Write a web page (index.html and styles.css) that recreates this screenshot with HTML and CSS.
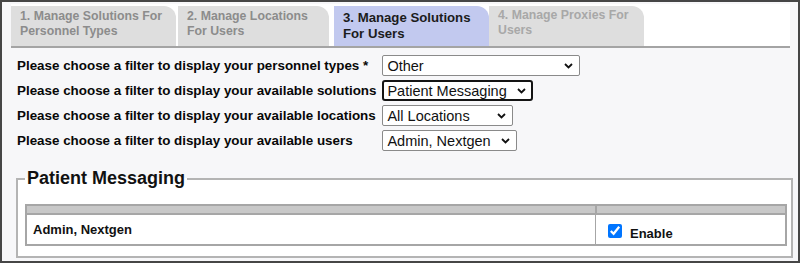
FILE: index.html
```html
<!DOCTYPE html>
<html>
<head>
<meta charset="utf-8">
<link rel="stylesheet" href="styles.css">
</head>
<body>
<div class="frame">
  <div class="tabs">
    <div class="tab tab-done">1. Manage Solutions For Personnel Types</div>
    <div class="tab tab-done tab-2">2. Manage Locations For Users</div>
    <div class="tab tab-active">3. Manage Solutions For Users</div>
    <div class="tab tab-next">4. Manage Proxies For Users</div>
  </div>
  <div class="content">
    <div class="filters">
      <label class="flabel">Please choose a filter to display your personnel types *</label>
      <span class="selwrap"><select class="sel sel-wide"><option>Other</option></select><svg class="chev" width="9" height="6" viewBox="0 0 9 6"><path d="M1 1 L4.5 4.5 L8 1" fill="none" stroke="#111" stroke-width="1.8"/></svg></span>
      <label class="flabel">Please choose a filter to display your available solutions</label>
      <span class="selwrap"><select class="sel sel-focus sel-sol"><option>Patient Messaging</option></select><svg class="chev" width="9" height="6" viewBox="0 0 9 6"><path d="M1 1 L4.5 4.5 L8 1" fill="none" stroke="#111" stroke-width="1.8"/></svg></span>
      <label class="flabel">Please choose a filter to display your available locations</label>
      <span class="selwrap"><select class="sel sel-loc"><option>All Locations</option></select><svg class="chev" width="9" height="6" viewBox="0 0 9 6"><path d="M1 1 L4.5 4.5 L8 1" fill="none" stroke="#111" stroke-width="1.8"/></svg></span>
      <label class="flabel">Please choose a filter to display your available users</label>
      <span class="selwrap"><select class="sel sel-user"><option>Admin, Nextgen</option></select><svg class="chev" width="9" height="6" viewBox="0 0 9 6"><path d="M1 1 L4.5 4.5 L8 1" fill="none" stroke="#111" stroke-width="1.8"/></svg></span>
    </div>
    <fieldset class="box">
      <legend class="box-title">Patient Messaging</legend>
      <table class="grid">
        <thead>
          <tr><th class="c-name"></th><th class="c-en"></th></tr>
        </thead>
        <tbody>
          <tr>
            <td class="c-name">Admin, Nextgen</td>
            <td class="c-en"><label class="enable"><input type="checkbox" checked> <span>Enable</span></label></td>
          </tr>
        </tbody>
      </table>
    </fieldset>
  </div>
</div>
</body>
</html>
```
FILE: styles.css
```css
html, body {
  margin: 0;
  padding: 0;
}
body {
  font-family: "Liberation Sans", Arial, sans-serif;
  background: #ffffff;
}
.frame {
  width: 800px;
  height: 263px;
  box-sizing: border-box;
  border: 2px solid #464646;
  background: #f7f7f9;
  overflow: hidden;
}
.tabs {
  display: flex;
  align-items: flex-end;
  margin: 2px 8px 0 9px;
  height: 42px;
  border-bottom: 2px solid #a4a4a4;
  background: #ffffff;
}
.tab {
  box-sizing: border-box;
  height: 40px;
  padding: 3px 8px 0 9px;
  font-size: 12.3px;
  font-weight: bold;
  line-height: 15px;
  border-top-right-radius: 12px;
  background: #dedede;
  color: #8c8c8c;
}
.tab-done { width: 165px; }
.tab-2 { margin-left: 2px; width: 151px; }
.tab-active {
  margin-left: 5px;
  width: 155px;
  background: #c2c9ef;
  color: #1c1c1c;
  font-size: 13.2px;
  line-height: 16px;
  padding-top: 4px;
}
.tab-next {
  width: 155px;
  color: #a8a8a8;
  padding-top: 2px;
}
.content {
  padding: 7px 6px 0 15px;
}
.filters {
  display: grid;
  grid-template-columns: max-content max-content;
  column-gap: 6px;
  row-gap: 4px;
  justify-items: start;
  align-items: center;
}
.flabel {
  font-size: 13.4px;
  font-weight: bold;
  color: #080808;
}
.selwrap {
  position: relative;
  display: inline-block;
  height: 21px;
}
.sel {
  display: block;
  -webkit-appearance: none;
  appearance: none;
  font-family: "Liberation Sans", Arial, sans-serif;
  font-size: 14.5px;
  height: 21px;
  box-sizing: border-box;
  border: 1px solid #8a8a8a;
  border-radius: 2px;
  background-color: #ffffff;
  color: #111;
  padding: 0 0 0 4px;
}
.chev {
  position: absolute;
  right: 7px;
  top: 8px;
  pointer-events: none;
}
.sel-wide { width: 198px; }
.sel-sol { width: 151px; }
.sel-loc { width: 131px; }
.sel-user { width: 135px; }
.sel-focus {
  border: 2px solid #141414;
  border-radius: 3px;
  padding-left: 3px;
}
.box {
  margin: 17px 0 0 -1px;
  padding: 14px 4px 13px 8px;
  width: 777px;
  box-sizing: border-box;
  height: 90px;
  border: 2px solid #b4b4b4;
  border-radius: 0;
  background: #ffffff;
}
.box-title {
  font-size: 18px;
  font-weight: bold;
  color: #111;
  padding: 0 2px;
  margin-left: -1px;
}
.grid {
  width: 762px;
  border-collapse: collapse;
  border: 2px solid #a6a6a6;
  margin-top: 1px;
  margin-left: -1px;
}
.grid th {
  height: 7px;
  padding: 0;
  background: #c8c8c8;
  border: 2px solid #a6a6a6;
  border-top: 0;
}
.grid td {
  height: 25px;
  padding: 0 6px;
  font-size: 13px;
  font-weight: bold;
  color: #111;
  border-left: 1px solid #a6a6a6;
}
.grid .c-en {
  width: 171px;
}
.grid td.c-en {
  padding-left: 12px;
  padding-top: 4px;
}
.enable {
  display: flex;
  align-items: center;
  gap: 8px;
}
.enable input {
  margin: 0;
  width: 14px;
  height: 14px;
  position: relative;
  top: -1px;
}
.enable span {
  padding-top: 3px;
}
```
